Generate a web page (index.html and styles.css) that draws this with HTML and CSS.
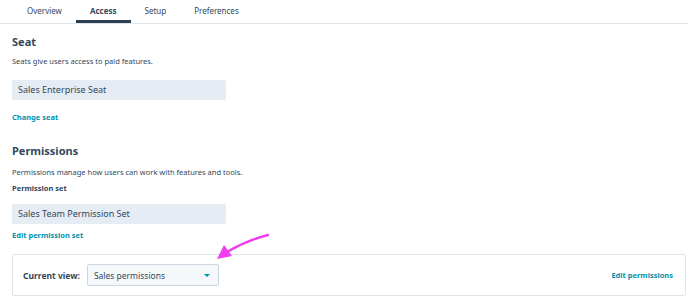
FILE: index.html
```html
<!DOCTYPE html>
<html lang="en">
<head>
    <meta charset="UTF-8">
    <meta name="viewport" content="width=device-width, initial-scale=1.0">
    <title>User access</title>
    <link rel="stylesheet" href="styles.css">
</head>
<body>
    <nav class="tabs">
        <a class="tab">Overview</a>
        <a class="tab active">Access</a>
        <a class="tab">Setup</a>
        <a class="tab">Preferences</a>
    </nav>

    <main class="content">
        <section class="block">
            <h2 class="title">Seat</h2>
            <p class="help">Seats give users access to paid features.</p>
            <div class="readonly">Sales Enterprise Seat</div>
            <a class="link">Change seat</a>
        </section>

        <section class="block perms">
            <h2 class="title">Permissions</h2>
            <p class="help">Permissions manage how users can work with features and tools.</p>
            <p class="label">Permission set</p>
            <div class="readonly">Sales Team Permission Set</div>
            <a class="link">Edit permission set</a>
        </section>

        <div class="view-card">
            <span class="view-label">Current view:</span>
            <div class="select">
                Sales permissions
                <span class="caret"></span>
            </div>
            <a class="link edit-perms">Edit permissions</a>
        </div>
    </main>

    <!-- freccia di annotazione sopra la pagina -->
    <svg class="pointer" width="60" height="30" viewBox="0 0 60 30">
        <path d="M54 2 Q 34 7 13 19" fill="none" stroke="#f03cf0" stroke-width="2.4" stroke-linecap="round"/>
        <polygon points="3,26 10,12 18,23" fill="#f03cf0"/>
    </svg>
</body>
</html>
```

FILE: styles.css
```css
body {
    margin: 0;
    font-family: "Noto Sans", sans-serif;
    color: #33475b;
    background: #fff;
    position: relative;
    width: 688px;
    height: 300px;
    overflow: hidden;
}

/* Barra delle schede */
.tabs {
    display: flex;
    height: 23px;
    border-bottom: 1px solid #dfe3eb;
    padding-left: 13px;
}
.tab {
    font-size: 8px;
    color: #33475b;
    padding: 0 14px;
    line-height: 22px;
    border-bottom: 3px solid transparent;
    height: 20px;
}
.tab.active {
    font-weight: 700;
    border-bottom-color: #2d3e50;
}

.content {
    padding: 0 2px 0 12px;
}

.block {
    display: flex;
    flex-direction: column;
    align-items: flex-start;
}

.title {
    font-size: 11px;
    font-weight: 700;
    margin: 10px 0 0;
    line-height: 16px;
}
.perms .title {
    margin-top: 21px;
}

.help {
    font-size: 7.5px;
    margin: 6px 0 0;
    line-height: 10px;
}
.perms .help {
    margin-top: 8px;
}

.label {
    font-size: 7.5px;
    font-weight: 700;
    margin: 6px 0 0;
    line-height: 10px;
}

.readonly {
    width: 202px;
    height: 20px;
    line-height: 20px;
    padding: 0 6px;
    margin-top: 14px;
    background: #e5ecf3;
    border-radius: 2px;
    font-size: 9px;
    color: #33475b;
}
.perms .readonly {
    margin-top: 11px;
}

.link {
    font-size: 7.5px;
    font-weight: 700;
    color: #0091ae;
    line-height: 10px;
    margin-top: 12px;
}
.perms .link {
    margin-top: 6px;
}

/* Riquadro "Current view" */
.view-card {
    display: flex;
    align-items: center;
    margin-top: 14px;
    height: 40px;
    border: 1px solid #dfe3eb;
    border-radius: 2px;
    padding: 0 12px 0 10px;
}
.view-label {
    font-size: 8.5px;
    font-weight: 700;
    margin-right: 7px;
}
.select {
    display: flex;
    align-items: center;
    justify-content: space-between;
    width: 118px;
    height: 20px;
    padding: 0 6px;
    background: #f5f8fa;
    border: 1px solid #cbd6e2;
    border-radius: 2px;
    font-size: 8.5px;
}
.caret {
    width: 0;
    height: 0;
    border-left: 3px solid transparent;
    border-right: 3px solid transparent;
    border-top: 3px solid #0091ae;
    margin-right: 2px;
}
.edit-perms {
    margin: 0 0 0 auto;
}

.pointer {
    position: absolute;
    left: 214px;
    top: 233px;
}
```
